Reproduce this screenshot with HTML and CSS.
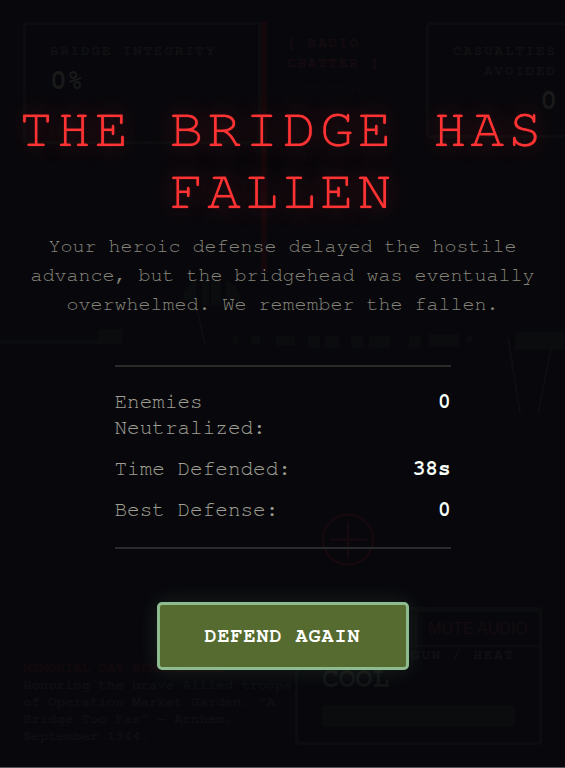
FILE: index.html
```html
<!DOCTYPE html>
<html lang="en">
<head>
<meta charset="utf-8">
<meta name="viewport" content="width=device-width, initial-scale=1">
<title>The Bridge Has Fallen</title>
<link rel="stylesheet" href="styles.css">
</head>
<body>
<div class="game">
  <div class="hud" inert>
    <svg class="scene" viewBox="0 0 565 768" preserveAspectRatio="xMidYMid slice" aria-hidden="true">
      <g fill="#0b0c0e">
        <path d="M0 340H98V330H122V345H0zM515 333H565V350H515z"/>
        <path d="M184 300V292Q190 283 196 280V303zM202 280H209V306H202zM211 280H221V306H211zM226 280Q238 286 240 296V302H226z"/>
        <path d="M233 336H238V344H233zM251 336H260V345H251zM276 336H295V346H276zM308 336H320V348H308zM325 336H339V348H325zM351 336H363V348H351zM369 336H390V348H369zM409 336H421V348H409zM429 335H459V347H429zM467 336H472V342H467z"/>
      </g>
      <path d="M508 338L520 414M552 344L538 414M197 310L205 345" stroke="#0d0e10" stroke-width="2" fill="none"/>
      <g stroke="#170a0e" stroke-width="2" fill="none">
        <circle cx="348" cy="540" r="25"/>
        <path d="M330 540H367M348 522V559"/>
      </g>
    </svg>
    <div class="hud-top">
      <div class="card">
        <div class="card-label">BRIDGE INTEGRITY</div>
        <div class="card-value">0%</div>
      </div>
      <div class="radio">
        <div class="radio-title">[ RADIO CHATTER ]</div>
        <p>Command: "Command, enemy paratroopers on ground. Watch the skies."</p>
      </div>
      <div class="card card-right">
        <div class="card-label">CASUALTIES AVOIDED</div>
        <div class="card-value">0</div>
      </div>
    </div>
    <div class="hud-bottom">
      <div class="memorial">
        <div class="memorial-title">MEMORIAL DAY REMEMBRANCE</div>
        <p>Honoring the brave Allied troops of Operation Market Garden. "A Bridge Too Far" — Arnhem, September 1944.</p>
      </div>
      <div class="weapon">
        <button class="mute" type="button">MUTE AUDIO</button>
        <div class="heat-label">GUN / HEAT</div>
        <div class="heat-value">COOL</div>
        <div class="heat-bar"></div>
      </div>
    </div>
  </div>
  <main class="overlay">
    <h1>THE BRIDGE HAS FALLEN</h1>
    <p class="message">Your heroic defense delayed the hostile advance, but the bridgehead was eventually overwhelmed. We remember the fallen.</p>
    <dl class="stats">
      <div class="stat"><dt>Enemies Neutralized:</dt><dd>0</dd></div>
      <div class="stat"><dt>Time Defended:</dt><dd>38s</dd></div>
      <div class="stat"><dt>Best Defense:</dt><dd>0</dd></div>
    </dl>
    <button class="again" type="button">DEFEND AGAIN</button>
  </main>
</div>
</body>
</html>
```
FILE: styles.css
```css
* { box-sizing: border-box; margin: 0; padding: 0; }
body {
  background: #08080c;
  font-family: FreeMono, "Courier Prime", "Liberation Mono", monospace;
}
.game {
  position: relative;
  min-height: 100vh;
  overflow: hidden;
  border-bottom: 1px solid #55555a;
}
.hud {
  position: absolute;
  inset: 0;
  display: flex;
  flex-direction: column;
  justify-content: space-between;
  padding: 22px 23px;
  color: #101113;
}
.scene { position: absolute; inset: 0; width: 100%; height: 100%; }
.hud-top { display: flex; align-items: flex-start; }
.card {
  flex: 0 0 238px;
  height: 122px;
  padding: 16px 24px;
  border: 3px solid #0b0d0e;
  border-radius: 4px;
}
.card-label { font-size: 14px; line-height: 20px; letter-spacing: 2px; font-weight: bold; }
.card-value { font-size: 28px; line-height: 40px; font-weight: bold; color: #191a1a; }
.card-right { flex: 0 0 142px; height: 116px; padding: 16px 8px; text-align: right; }
.radio {
  flex: 0 0 165px;
  height: 250px;
  padding: 11px 10px 0 20px;
  border-left: 6px solid #14080c;
  color: #11090d;
  font-size: 16px;
  line-height: 23px;
  overflow: hidden;
}
.radio-title {
  padding-right: 20px;
  color: #160b0f;
  font-size: 14px;
  line-height: 20px;
  letter-spacing: 2px;
  font-weight: bold;
}
.radio p { margin-top: 3px; font-style: italic; }
.hud-bottom { display: flex; justify-content: space-between; align-items: flex-end; }
.memorial { width: 272px; font-size: 14px; line-height: 17px; font-weight: bold; color: #0e0f11; }
.memorial-title { color: #12090d; white-space: nowrap; }
.weapon {
  width: 247px;
  height: 138px;
  padding: 0 24px;
  border: 3px solid #0b0d0e;
  border-radius: 4px;
}
.mute {
  display: block;
  width: 126px;
  height: 37px;
  margin: 0 -26px 0 auto;
  border: 2px solid #0b0d0e;
  background: #08080c;
  color: #140c10;
  font: 16px "Liberation Sans", sans-serif;
}
.heat-label { line-height: 16px; letter-spacing: 2px; font-size: 14px; font-weight: bold; text-align: right; }
.heat-value { font-size: 28px; line-height: 32px; font-weight: bold; color: #121415; }
.heat-bar { height: 22px; margin-top: 10px; border-radius: 3px; background: #0b0c0e; }
.overlay {
  position: relative;
  min-height: calc(100vh - 1px);
  display: flex;
  flex-direction: column;
  align-items: center;
  justify-content: center;
  padding: 20px 16px;
  text-align: center;
}
h1 {
  color: #ff3333;
  font-size: 56px;
  font-weight: normal;
  line-height: 62px;
  letter-spacing: 4px;
  text-shadow: 0 0 1px #ff3333, 0 0 24px rgba(255, 51, 51, 0.4);
}
.message {
  max-width: 520px;
  margin-top: 10px;
  color: #85857a;
  font-size: 20px;
  line-height: 29px;
}
.stats {
  width: 336px;
  max-width: 100%;
  margin: 46px 0 53px;
  padding: 22px 0 24px;
  border-top: 2px solid #2a2b29;
  border-bottom: 2px solid #2a2b2d;
  display: grid;
  gap: 15px;
  font-size: 21px;
  line-height: 26px;
}
.stat { display: flex; justify-content: space-between; gap: 60px; }
dt { max-width: 200px; color: #a0a095; text-align: left; }
dd { color: #f8fff8; font-weight: bold; }
.again {
  padding: 18px 45px;
  border: 3px solid #8fbc8f;
  border-radius: 5px;
  background: #556b2f;
  color: #ffffff;
  font-family: inherit;
  font-size: 20px;
  font-weight: bold;
  line-height: 26px;
  letter-spacing: 1px;
  box-shadow: 0 0 20px rgba(143, 188, 143, 0.15);
}
```
